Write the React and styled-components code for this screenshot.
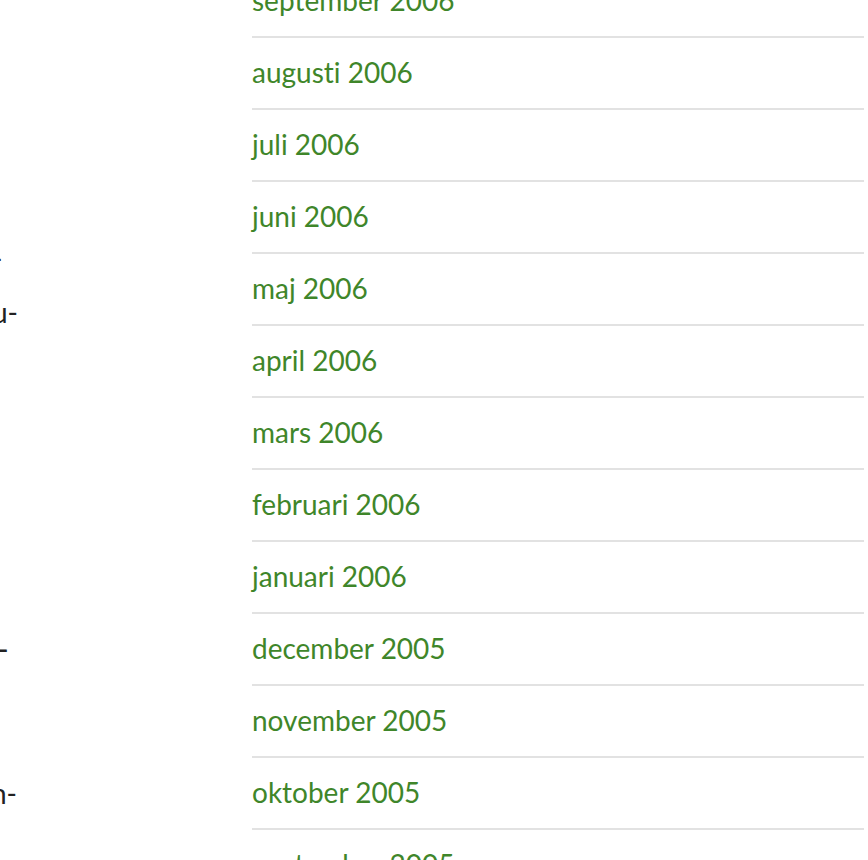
import React from "react";
import styled, { createGlobalStyle } from "styled-components";

const GlobalStyle = createGlobalStyle`
  body {
    margin: 0;
    background: #fff;
    overflow: hidden;
    font-family: Lato, "Open Sans", sans-serif;
    font-variant-ligatures: none;
  }
`;

const Page = styled.div`
  display: flex;
  width: 868px;
  height: 860px;
  overflow: hidden;
`;

const SideText = styled.div`
  width: 252px;
  flex-shrink: 0;
  overflow: hidden;
  display: flex;
  flex-direction: column;
`;

const Fragment = styled.div`
  margin-top: ${({ $gap }) => `${$gap}px`};
  margin-left: ${({ $shift }) => `${$shift}px`};
  font-size: 28px;
  line-height: 36px;
  color: #222;
  white-space: nowrap;
  font-weight: ${({ $bold }) => ($bold ? 700 : 400)};
`;

const ArchiveList = styled.ul`
  list-style: none;
  margin: -34px 4px 0 0;
  padding: 0;
  flex: 1;
`;

const ArchiveItem = styled.li`
  height: 70px;
  display: flex;
  align-items: center;
  border-bottom: 2px solid #e2e2e2;
`;

const ArchiveLink = styled.a`
  color: #3f862a;
  font-size: 28px;
  line-height: 1;
  padding-bottom: 2px;
  text-decoration: none;
`;

const months = [
  "september 2006",
  "augusti 2006",
  "juli 2006",
  "juni 2006",
  "maj 2006",
  "april 2006",
  "mars 2006",
  "februari 2006",
  "januari 2006",
  "december 2005",
  "november 2005",
  "oktober 2005",
  "september 2005",
];

const fragments = [
  { text: "-", gap: 240, shift: -8 },
  { text: "u-", gap: 18, shift: -8 },
  { text: "–", gap: 300, shift: -7, bold: true },
  { text: "n-", gap: 109, shift: -9 },
];

const App = () => {
  return (
    <>
      <GlobalStyle />
      <Page>
        <SideText>
          {fragments.map((f, i) => (
            <Fragment key={i} $gap={f.gap} $shift={f.shift} $bold={f.bold}>
              {f.text}
            </Fragment>
          ))}
        </SideText>
        <ArchiveList>
          {months.map((m) => (
            <ArchiveItem key={m}>
              <ArchiveLink href="#">{m}</ArchiveLink>
            </ArchiveItem>
          ))}
        </ArchiveList>
      </Page>
    </>
  );
};

export default App;
